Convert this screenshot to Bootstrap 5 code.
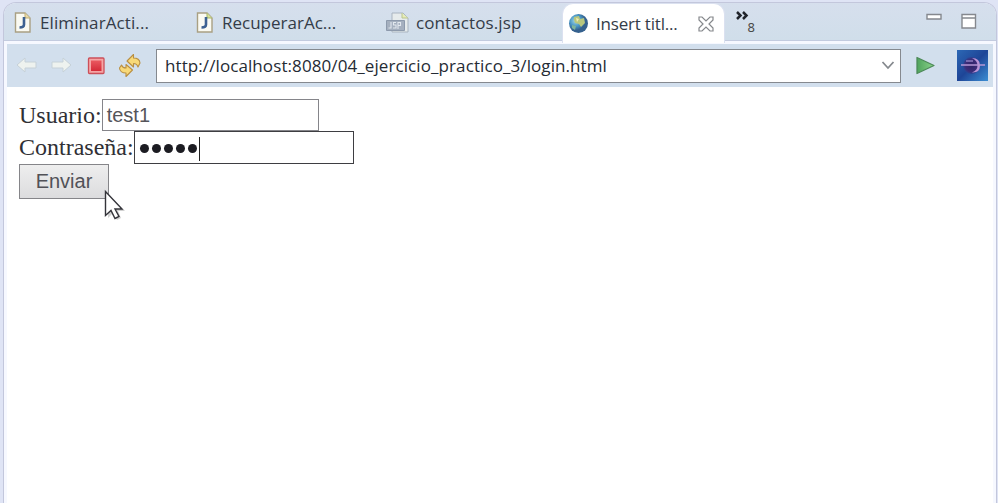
<!DOCTYPE html>
<html lang="es">
<head>
<meta charset="utf-8">
<meta name="viewport" content="width=device-width, initial-scale=1">
<title>Insert title here</title>
<link href="https://cdn.jsdelivr.net/npm/bootstrap@5.3.0/dist/css/bootstrap.min.css" rel="stylesheet">
<style>
body{background:#dfe4f5;font-family:"Open Sans","Noto Sans",sans-serif;color:#343c48;height:503px;overflow:hidden}
svg{display:block;flex:none}
.pane{height:501px;margin:2px 0 0 3px;width:994px;border:1px solid #c3c7dc;border-bottom:0;border-radius:13px 13px 0 0;background:#f6f8ff;padding:0 3px;overflow:hidden}
.tabs{height:38px;margin:0 -3px;background:linear-gradient(#d6dfed,#d0deea);border-bottom:1px solid #c3cbdf}
.etab{height:39px;font-size:17px;white-space:nowrap;line-height:39px}
.etab svg{margin-right:9px}
.t1{width:182px;padding-left:10px;letter-spacing:.1px}.t2{width:189px;padding-left:10px}.t3{width:187px;padding-left:11px;letter-spacing:.1px}
.t3 svg{margin-right:7px}
.t4{width:163px;height:40px;background:#fff;border-radius:11px 11px 0 0;padding-left:5px;margin-bottom:-3px;border:1px solid #dbe1f0;border-bottom:0;line-height:38px;letter-spacing:-.2px}
.t4 svg{margin-right:7px}
.t4 .close-x{margin-right:10px}
.winctl{margin-right:18px}
.toolbar-row{height:43px;margin-top:3px;background:#d2dfed}
.address{width:745px;height:34px;border:1px solid #85898f;background:#fff;font-size:17px;letter-spacing:.09px;color:#252b34;padding:0 5px 0 8px}
.page{height:416px;background:#fff;padding:12px 0 0 12px;font-family:"Liberation Serif",serif;font-size:24px;line-height:32px;color:#303035}
.fld{border:1px solid #85858a;height:32px;width:217px;background:#fff;font-family:"Liberation Sans",sans-serif;font-size:20px;line-height:31px;padding:0 4px;color:#55555a}
.pwd{width:220px;height:33px;border-color:#3e3e42;padding:2px 5px 0}
.dot{width:9px;height:9px;border-radius:50%;background:#1c1c22;margin-right:3px}
.caret{width:1px;height:24px;margin-left:-1px;background:#222}
.send{width:90px;height:35px;border:1px solid #858589;border-radius:0;background:linear-gradient(#eee,#dcdcde);font-family:"Liberation Sans",sans-serif;font-size:20px;line-height:31px;color:#515157;padding:0 0 1px}
.send:hover{color:#515157}
.pointer{position:absolute;left:103px;top:189px}
</style>
</head>
<body>
<main class="pane">
  <nav class="tabs d-flex align-items-start">
    <div class="etab t1 d-flex align-items-center">
      <svg width="17" height="21" viewBox="0 0 17 21"><path d="M1.500 1H11l5 5v14H1.500z" fill="#fafaf2" stroke="#a9a083" stroke-width="1.400"/><path d="M11 1v5h5" fill="#e9d9a7" stroke="#c1ae73"/><path d="M10 5v7.500q0 3-4.500 3" fill="none" stroke="#3d6191" stroke-width="2.600"/></svg>
      <span>EliminarActi...</span>
    </div>
    <div class="etab t2 d-flex align-items-center">
      <svg width="17" height="21" viewBox="0 0 17 21"><path d="M1.500 1H11l5 5v14H1.500z" fill="#fafaf2" stroke="#a9a083" stroke-width="1.400"/><path d="M11 1v5h5" fill="#d5e29a" stroke="#a7b66b"/><path d="M10 5v7.500q0 3-4.500 3" fill="none" stroke="#3d6191" stroke-width="2.600"/></svg>
      <span>RecuperarAc...</span>
    </div>
    <div class="etab t3 d-flex align-items-center">
      <svg width="23" height="22" viewBox="0 0 23 22"><path d="M6 1h11l5 5v14H6z" fill="#e6ebec" stroke="#a9b4c0"/><path d="M16 1v5h6" fill="#e7edb5" stroke="#b9c491"/><path d="M.5 8.500h18v10H.5z" fill="#a5b0bf" stroke="#8d9aac"/><path d="M5 10v6H2.500M10 10.500H7.500v2.500H10v3H7M12 17v-6.500h2.500v3H12" fill="none" stroke="#e2e8ee" stroke-width="1.100"/></svg>
      <span>contactos.jsp</span>
    </div>
    <div class="etab t4 d-flex align-items-center">
      <svg width="21" height="21" viewBox="0 0 21 21"><defs><radialGradient id="globe" cx=".35" cy=".35"><stop offset="0" stop-color="#a6dbe8"/><stop offset=".6" stop-color="#4996c5"/><stop offset="1" stop-color="#35618e"/></radialGradient></defs><circle cx="10.500" cy="10.500" r="9.500" fill="url(#globe)"/><path d="M6 4l5-1 1 3 4-1 1 5-4 4-2-3-4-1-1-3z" fill="#b8c77e"/><path d="M8 5l3 1-2 3z" fill="#efedb4"/><path d="M4 12l4 1-1 4-3-2z" fill="#7db49b"/></svg>
      <span class="flex-grow-1">Insert titl...</span>
      <svg class="close-x" width="16" height="16" viewBox="0 0 16 16"><path d="M1 1h3l4 4 4-4h3v3l-4 4 4 4v3h-3l-4-4-4 4H1v-3l4-4-4-4z" fill="#fff" stroke="#85888c" stroke-width="1.200"/></svg>
    </div>
    <svg class="ms-2" width="30" height="36" viewBox="0 0 30 36"><path d="M4 9l3.500 3.500L4 16M10 9l3.500 3.500L10 16" fill="none" stroke="#20242b" stroke-width="2.500"/><text x="14.500" y="29" font-family="Noto Sans" font-size="13" fill="#4a4a48">8</text></svg>
    <svg class="winctl ms-auto mt-2" width="54" height="24" viewBox="0 0 54 24"><path d="M3 3.500h14v4.500H3z" fill="#fff" stroke="#85888e" stroke-width="1.400"/><path d="M38 3.500h13.500v13.500H38z" fill="#fff" stroke="#85888e" stroke-width="1.400"/><path d="M38 7h13" stroke="#85888e" stroke-width="1.400"/></svg>
  </nav>
  <div class="toolbar-row d-flex align-items-center">
    <svg width="149" height="43" viewBox="0 0 149 43"><defs><linearGradient id="red" x2="0" y2="1"><stop stop-color="#ea5960"/><stop offset="1" stop-color="#d42a38"/></linearGradient></defs>
      <g fill="#eef2ef" stroke="#c6d1d8"><path d="M10 21l8-7v4h11v6H18v4z"/><path d="M64 21l-8-7v4H45v6h11v4z"/></g>
      <rect x="81.500" y="14" width="15.500" height="15.500" rx="1" fill="#f5a5a5" stroke="#cc4f59" stroke-width="1.300"/><rect x="84" y="16.500" width="10.500" height="10.500" fill="url(#red)"/>
      <g fill="#f8d978" stroke="#b98f42" stroke-width="1.100" stroke-linejoin="round"><path d="M120 17l6.500-6.500v3.500q6 0 6.500 5l-2 4q-1-3.500-4.500-3.500V23z"/><path d="M130 25l-6.500 6.500V28q-6 0-6.500-5l2-3q1 3 4.500 3v-3.500z" transform="translate(-4.500 1)"/></g></svg>
    <div class="address d-flex align-items-center justify-content-between"><span>http://localhost:8080/04_ejercicio_practico_3/login.html</span>
      <svg width="14" height="9" viewBox="0 0 14 9"><path d="M1.500 1L7 7l5.500-6" fill="none" stroke="#85898e" stroke-width="1.800"/></svg></div>
    <svg width="91" height="43" viewBox="0 0 91 43"><defs><linearGradient id="play"><stop stop-color="#4fa35c"/><stop offset="1" stop-color="#8bd38a"/></linearGradient><linearGradient id="blue" x2="1" y2="1"><stop stop-color="#2c68b5"/><stop offset=".5" stop-color="#1e4597"/><stop offset="1" stop-color="#3c8ed3"/></linearGradient><radialGradient id="ball"><stop offset="0" stop-color="#2d2468"/><stop offset=".7" stop-color="#3c2c78"/><stop offset="1" stop-color="#2a4596"/></radialGradient></defs>
      <path d="M16 13.500v16L33 21.500z" fill="url(#play)" stroke="#4d8a59" stroke-width="1.300" stroke-linejoin="round"/><path d="M56 6h31v31H56z" fill="url(#blue)"/><circle cx="70.500" cy="21.500" r="8.500" fill="url(#ball)"/><path d="M71 14q8 0 8 7.500T71 28.500q5.500-2 5.500-7T71 14z" fill="#b894d6"/><path d="M60 21h24" stroke="#b596d4" stroke-width="1.400"/><path d="M65 17h7" stroke="#8d7cc0" stroke-width="1.500"/></svg>
  </div>
  <section class="page">
    <div class="d-flex"><label>Usuario:</label><div class="fld">test1</div></div>
    <div class="d-flex"><label>Contraseña:</label><div class="fld pwd d-flex align-items-center"><i class="dot"></i><i class="dot"></i><i class="dot"></i><i class="dot"></i><i class="dot"></i><i class="caret"></i></div></div>
    <button class="btn send d-block">Enviar</button>
  </section>
</main>
<svg class="pointer" width="24" height="34" viewBox="0 0 24 34"><path d="M5 5v24l5-5 4 7 4-2-3-7h7z" fill="#999" opacity=".45"/><path d="M2.500 2.500v24l5.500-5 4 8 4-2-4-7.500h7z" fill="#fff" stroke="#34343a" stroke-width="1.400"/></svg>
<script src="https://cdn.jsdelivr.net/npm/bootstrap@5.3.0/dist/js/bootstrap.bundle.min.js"></script>
</body>
</html>
